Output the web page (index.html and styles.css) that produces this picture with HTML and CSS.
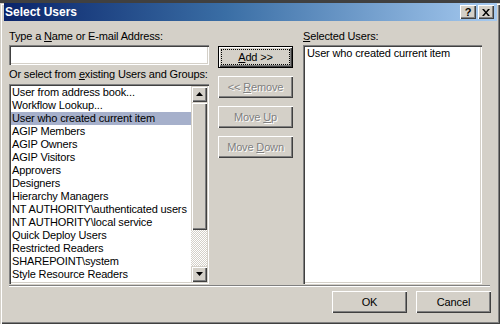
FILE: index.html
```html
<!DOCTYPE html>
<html lang="en">
<head>
    <meta charset="UTF-8">
    <title>Select Users</title>
    <link rel="stylesheet" href="styles.css">
</head>
<body>
    <div class="window">
        <div class="titlebar">
            <span class="title">Select Users</span>
            <div class="title-buttons">
                <span class="tbtn help">?</span>
                <span class="tbtn close">
                    <svg width="8" height="7" viewBox="0 0 8 7"><path d="M0 0h2l2 2.5L6 0h2L5 3.5 8 7H6L4 4.5 2 7H0l3-3.5z" fill="#000"/></svg>
                </span>
            </div>
        </div>

        <div class="main">
            <div class="col-left">
                <label class="label">Type a <u>N</u>ame or E-mail Address:</label>
                <div class="field"></div>
                <label class="label label-gap">Or select from <u>e</u>xisting Users and Groups:</label>
                <div class="listbox">
                    <ul class="items">
                        <li>User from address book...</li>
                        <li>Workflow Lookup...</li>
                        <li class="selected">User who created current item</li>
                        <li>AGIP Members</li>
                        <li>AGIP Owners</li>
                        <li>AGIP Visitors</li>
                        <li>Approvers</li>
                        <li>Designers</li>
                        <li>Hierarchy Managers</li>
                        <li>NT AUTHORITY\authenticated users</li>
                        <li>NT AUTHORITY\local service</li>
                        <li>Quick Deploy Users</li>
                        <li>Restricted Readers</li>
                        <li>SHAREPOINT\system</li>
                        <li>Style Resource Readers</li>
                    </ul>
                    <div class="scrollbar">
                        <span class="sb-btn">
                            <svg width="7" height="4" viewBox="0 0 7 4"><path d="M3.5 0L7 4H0z" fill="#000"/></svg>
                        </span>
                        <span class="sb-thumb"></span>
                        <span class="sb-track"></span>
                        <span class="sb-btn">
                            <svg width="7" height="4" viewBox="0 0 7 4"><path d="M0 0h7L3.5 4z" fill="#000"/></svg>
                        </span>
                    </div>
                </div>
            </div>

            <div class="col-buttons">
                <span class="btn default"><span class="focus"><span><u>A</u>dd &gt;&gt;</span></span></span>
                <span class="btn disabled"><span>&lt;&lt; <u>R</u>emove</span></span>
                <span class="btn disabled"><span>Move <u>U</u>p</span></span>
                <span class="btn disabled"><span>Move <u>D</u>own</span></span>
            </div>

            <div class="col-right">
                <label class="label"><u>S</u>elected Users:</label>
                <div class="listbox selected-list">
                    <ul class="items">
                        <li>User who created current item</li>
                    </ul>
                </div>
            </div>
        </div>

        <div class="separator"></div>

        <div class="footer">
            <span class="btn">OK</span>
            <span class="btn">Cancel</span>
        </div>
    </div>
</body>
</html>
```

FILE: styles.css
```css
* {
    margin: 0;
    padding: 0;
    box-sizing: border-box;
}

body {
    width: 500px;
    height: 324px;
    overflow: hidden;
    background: #404040;
    font-family: "Liberation Sans", Arial, sans-serif;
    font-size: 11px;
    letter-spacing: -0.15px;
    color: #000;
}

.window {
    width: 500px;
    height: 321px;
    background: #d4d0c8;
    box-shadow:
        inset 1px 1px #d4d0c8,
        inset 2px 2px #fff,
        inset -1px -1px #404040,
        inset -2px -2px #808080;
}

/* title bar */
.titlebar {
    margin: 3px 3px 0 4px;
    height: 18px;
    background: linear-gradient(90deg, #0a246a 0%, #3a6ea5 45%, #a6caf0 100%);
    display: flex;
    align-items: center;
    justify-content: space-between;
    padding: 0 3px 0 1px;
}

.title {
    color: #fff;
    font-weight: bold;
    font-size: 12px;
    letter-spacing: 0;
}

.title-buttons {
    display: flex;
    gap: 2px;
}

.tbtn {
    width: 16px;
    height: 14px;
    background: #d4d0c8;
    box-shadow: inset 1px 1px #fff, inset -1px -1px #404040, inset -2px -2px #808080;
    display: flex;
    align-items: center;
    justify-content: center;
    font-weight: bold;
    font-size: 11px;
    line-height: 14px;
}

/* main area */
.main {
    display: flex;
    padding: 9px 0 0 9px;
}

.label {
    display: block;
    height: 13px;
    line-height: 13px;
    white-space: nowrap;
}

.label-gap {
    margin-top: 3px;
}

.field {
    margin-top: 2px;
    height: 20px;
    background: #fff;
    box-shadow:
        inset 1px 1px #808080,
        inset 2px 2px #404040,
        inset -1px -1px #fff,
        inset -2px -2px #d4d0c8;
}

.col-left {
    width: 200px;
}

.listbox {
    margin-top: 3px;
    height: 200px;
    padding: 2px;
    background: #fff;
    display: flex;
    box-shadow:
        inset 1px 1px #808080,
        inset 2px 2px #404040,
        inset -1px -1px #fff,
        inset -2px -2px #d4d0c8;
}

.items {
    list-style: none;
    flex: 1;
    overflow: hidden;
}

.items li {
    height: 13px;
    line-height: 13px;
    padding-left: 1px;
    white-space: nowrap;
}

.items li.selected {
    background: #a6b0cb;
}

/* scrollbar */
.scrollbar {
    width: 16px;
    display: flex;
    flex-direction: column;
}

.sb-btn {
    height: 16px;
    background: #d4d0c8;
    box-shadow:
        inset 1px 1px #d4d0c8,
        inset 2px 2px #fff,
        inset -1px -1px #404040,
        inset -2px -2px #808080;
    display: flex;
    align-items: center;
    justify-content: center;
}

.sb-thumb {
    height: 128px;
    background: #d4d0c8;
    box-shadow:
        inset 1px 1px #d4d0c8,
        inset 2px 2px #fff,
        inset -1px -1px #404040,
        inset -2px -2px #808080;
}

.sb-track {
    flex: 1;
    background-image: repeating-conic-gradient(#fff 0 25%, #d4d0c8 0 50%);
    background-size: 2px 2px;
}

/* buttons */
.col-buttons {
    margin: 16px 0 0 9px;
    display: flex;
    flex-direction: column;
    gap: 8px;
}

.btn {
    width: 75px;
    height: 22px;
    background: #d4d0c8;
    display: flex;
    align-items: center;
    justify-content: center;
    white-space: nowrap;
    box-shadow: inset 1px 1px #fff, inset -1px -1px #404040, inset -2px -2px #808080;
}

.btn.default {
    border: 1px solid #000;
    padding: 3px;
}

.focus {
    flex: 1;
    align-self: stretch;
    display: flex;
    align-items: center;
    justify-content: center;
    outline: 1px dotted #000;
}

.btn.disabled {
    color: #808080;
    text-shadow: 1px 1px #fff;
}

.col-right {
    margin-left: 10px;
    width: 179px;
}

.selected-list {
    margin-top: 2px;
    height: 239px;
}

.selected-list .items li {
    padding-left: 2px;
}

/* footer */
.separator {
    margin: 1px 10px 0 9px;
    height: 2px;
    border-top: 1px solid #808080;
    border-bottom: 1px solid #fff;
}

.footer {
    margin-top: 4px;
    padding-right: 9px;
    display: flex;
    justify-content: flex-end;
    gap: 9px;
}
```
